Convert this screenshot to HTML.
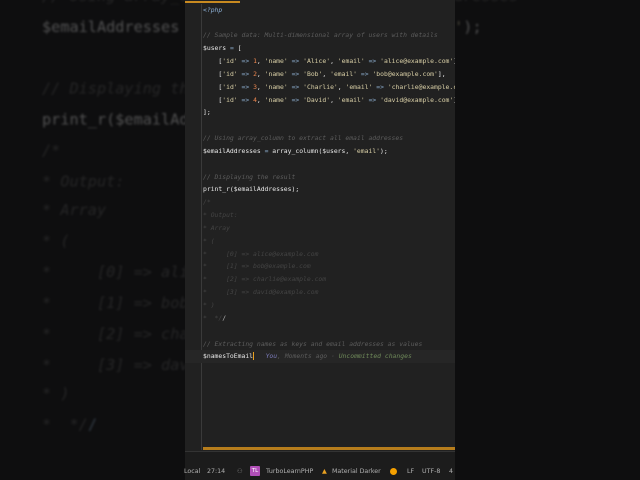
<!DOCTYPE html>
<html><head><meta charset="utf-8"><style>
html,body{margin:0;padding:0;width:640px;height:480px;overflow:hidden;background:#0e0e0f;}
.code{position:absolute;font-family:"DejaVu Sans Mono","Liberation Mono",monospace;font-size:6.4px;line-height:12.85px;white-space:pre;color:#e8e8e8;}
.c{color:#5d5d5d;font-style:italic}
.cd{color:#444;font-style:italic}
.s{color:#d9cfa6}
.n{color:#f0884f}
.o{color:#89a9c9}
.p{color:#8fb3d9;font-style:italic}
#bg{left:0;top:0;transform-origin:0 0;transform:translate(42px,-322.8px) scale(2.38);opacity:.3;filter:blur(0.5px);}
#panel{position:absolute;left:185px;top:0;width:270px;height:452px;background:#212121;overflow:hidden;}
#fg{left:18px;top:3.6px;}
.status{position:absolute;left:185px;top:452px;width:270px;height:28px;background:#1c1c1c;font-family:"DejaVu Sans","Liberation Sans",sans-serif;font-size:6.3px;color:#b0b0b0;}
.status span{position:absolute;top:16px;}
</style></head><body>
<div class="code" id="bg"><span class="p">&lt;?php</span>

<span class="c">// Sample data: Multi-dimensional array of users with details</span>
$users <span class="o">=</span> [
    [<span class="s">'id'</span> <span class="o">=&gt;</span> <span class="n">1</span>, <span class="s">'name'</span> <span class="o">=&gt;</span> <span class="s">'Alice'</span>, <span class="s">'email'</span> <span class="o">=&gt;</span> <span class="s">'alice@example.com'</span>],
    [<span class="s">'id'</span> <span class="o">=&gt;</span> <span class="n">2</span>, <span class="s">'name'</span> <span class="o">=&gt;</span> <span class="s">'Bob'</span>, <span class="s">'email'</span> <span class="o">=&gt;</span> <span class="s">'bob@example.com'</span>],
    [<span class="s">'id'</span> <span class="o">=&gt;</span> <span class="n">3</span>, <span class="s">'name'</span> <span class="o">=&gt;</span> <span class="s">'Charlie'</span>, <span class="s">'email'</span> <span class="o">=&gt;</span> <span class="s">'charlie@example.com'</span>],
    [<span class="s">'id'</span> <span class="o">=&gt;</span> <span class="n">4</span>, <span class="s">'name'</span> <span class="o">=&gt;</span> <span class="s">'David'</span>, <span class="s">'email'</span> <span class="o">=&gt;</span> <span class="s">'david@example.com'</span>],
];

<span class="c">// Using array_column to extract all email addresses</span>
$emailAddresses <span class="o">=</span> array_column($users, <span class="s">'email'</span>);

<span class="c">// Displaying the result</span>
print_r($emailAddresses);
<span class="c">/*</span>
<span class="c">* Output:</span>
<span class="c">* Array</span>
<span class="c">* (</span>
<span class="c">*     [0] =&gt; alice@example.com</span>
<span class="c">*     [1] =&gt; bob@example.com</span>
<span class="c">*     [2] =&gt; charlie@example.com</span>
<span class="c">*     [3] =&gt; david@example.com</span>
<span class="c">* )</span>
<span class="c">*  */</span><span class="o">/</span></div>
<div id="panel">
<div style="position:absolute;left:0;top:1px;width:55px;height:2px;background:#c88a20"></div>
<div style="position:absolute;left:16px;top:4px;width:1px;height:446px;background:#3a3a3a"></div>
<div style="position:absolute;left:0;top:350px;width:270px;height:13px;background:#262626"></div>
<div class="code" id="fg"><span class="p">&lt;?php</span>

<span class="c">// Sample data: Multi-dimensional array of users with details</span>
$users <span class="o">=</span> [
    [<span class="s">'id'</span> <span class="o">=&gt;</span> <span class="n">1</span>, <span class="s">'name'</span> <span class="o">=&gt;</span> <span class="s">'Alice'</span>, <span class="s">'email'</span> <span class="o">=&gt;</span> <span class="s">'alice@example.com'</span>],
    [<span class="s">'id'</span> <span class="o">=&gt;</span> <span class="n">2</span>, <span class="s">'name'</span> <span class="o">=&gt;</span> <span class="s">'Bob'</span>, <span class="s">'email'</span> <span class="o">=&gt;</span> <span class="s">'bob@example.com'</span>],
    [<span class="s">'id'</span> <span class="o">=&gt;</span> <span class="n">3</span>, <span class="s">'name'</span> <span class="o">=&gt;</span> <span class="s">'Charlie'</span>, <span class="s">'email'</span> <span class="o">=&gt;</span> <span class="s">'charlie@example.com'</span>],
    [<span class="s">'id'</span> <span class="o">=&gt;</span> <span class="n">4</span>, <span class="s">'name'</span> <span class="o">=&gt;</span> <span class="s">'David'</span>, <span class="s">'email'</span> <span class="o">=&gt;</span> <span class="s">'david@example.com'</span>],
];

<span class="c">// Using array_column to extract all email addresses</span>
$emailAddresses <span class="o">=</span> array_column($users, <span class="s">'email'</span>);

<span class="c">// Displaying the result</span>
print_r($emailAddresses);
<span class="cd">/*</span>
<span class="cd">* Output:</span>
<span class="cd">* Array</span>
<span class="cd">* (</span>
<span class="cd">*     [0] =&gt; alice@example.com</span>
<span class="cd">*     [1] =&gt; bob@example.com</span>
<span class="cd">*     [2] =&gt; charlie@example.com</span>
<span class="cd">*     [3] =&gt; david@example.com</span>
<span class="cd">* )</span>
<span class="cd">*  */</span><span style="color:#bbb">/</span>

<span class="c">// Extracting names as keys and email addresses as values</span>
$namesToEmail<span style="border-left:1px solid #e8a020"></span>   <span style="color:#7a7ab8;font-style:italic">You</span><span class="c">, Moments ago · </span><span style="color:#6f8a5a;font-style:italic">Uncommitted changes</span></div>
<div style="position:absolute;left:18px;top:447px;width:252px;height:3px;background:#b67d1c"></div>
</div>
<div style="position:absolute;left:185px;top:451px;width:270px;height:1px;background:#333"></div>
<div class="status">
<span style="left:-1px">Local</span>
<span style="left:22px">27:14</span>
<span style="left:52px;color:#777">⚇</span>
<span style="left:65px;top:14px;width:10px;height:10px;background:#b14fb8;color:#fff;border-radius:1px;font-size:5.5px;line-height:10px;text-align:center">TL</span>
<span style="left:81px">TurboLearnPHP</span>
<span style="left:137px;color:#e8a020">▲</span>
<span style="left:147px">Material Darker</span>
<span style="left:205px;top:16px;width:7px;height:7px;border-radius:50%;background:#f5a000"></span>
<span style="left:222px">LF</span>
<span style="left:237px">UTF-8</span>
<span style="left:264px">4</span>
</div>
</body></html>
